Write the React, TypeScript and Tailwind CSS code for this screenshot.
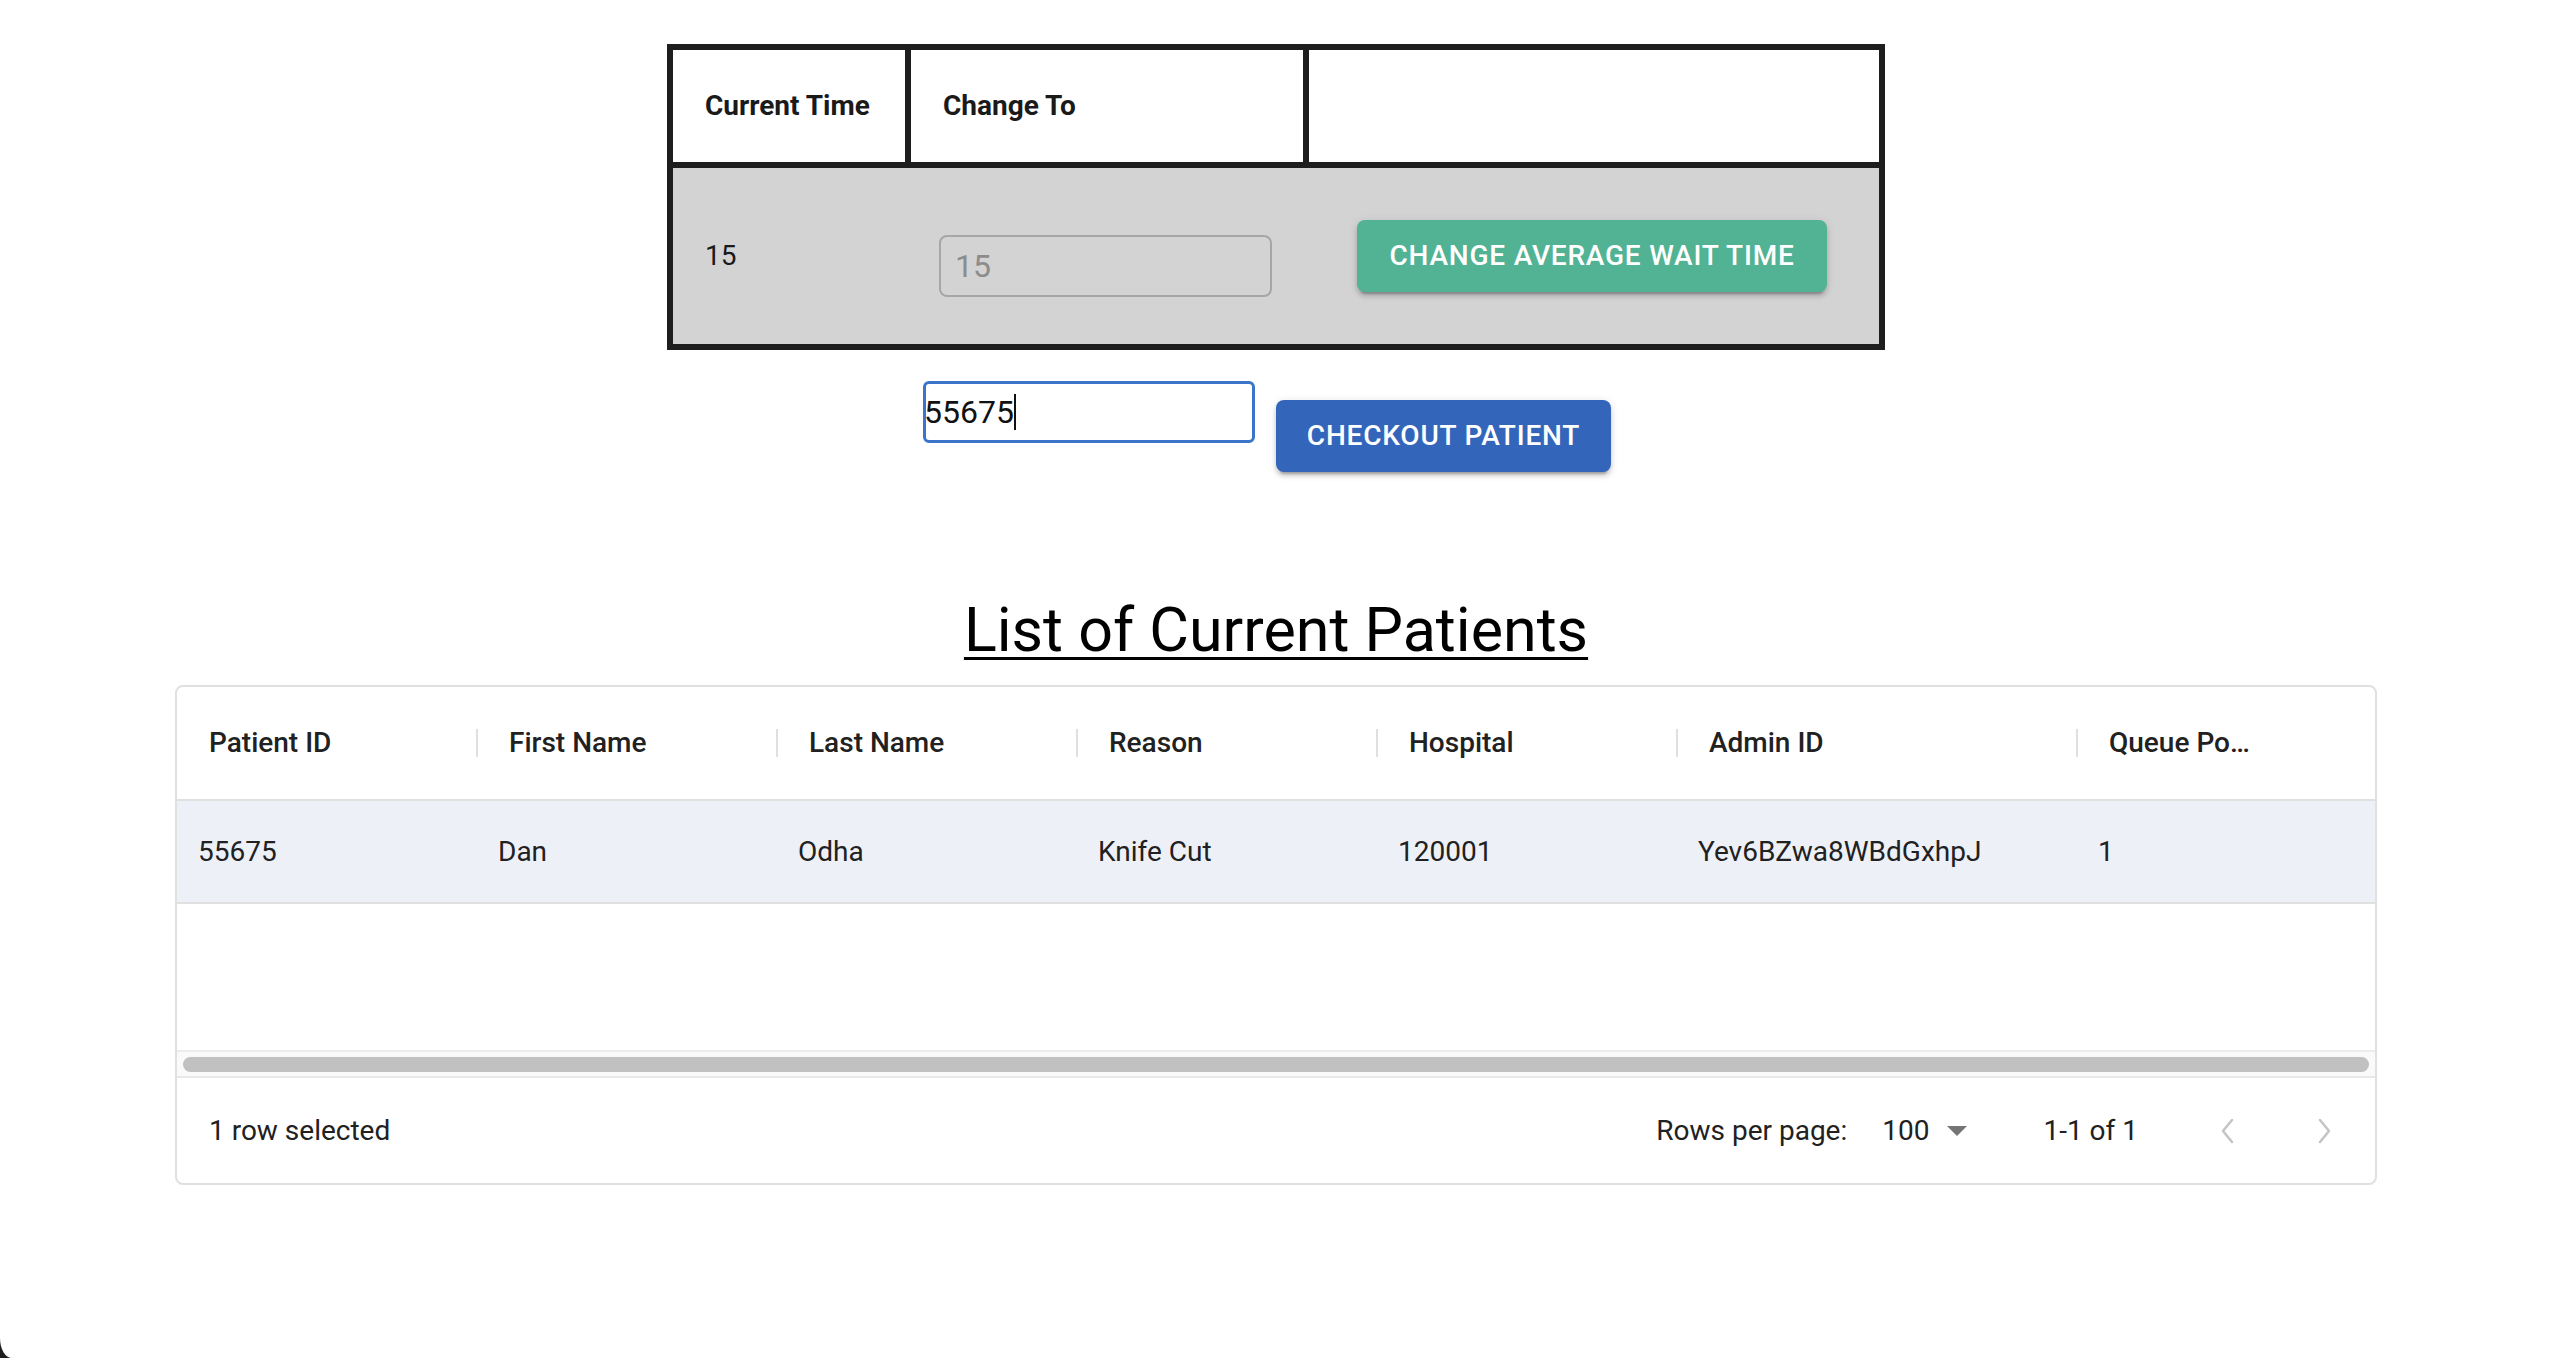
import React from "react";

const cols = [
  { h: "Patient ID", v: "55675", w: "w-[300px]" },
  { h: "First Name", v: "Dan", w: "w-[300px]" },
  { h: "Last Name", v: "Odha", w: "w-[300px]" },
  { h: "Reason", v: "Knife Cut", w: "w-[300px]" },
  { h: "Hospital", v: "120001", w: "w-[300px]" },
  { h: "Admin ID", v: "Yev6BZwa8WBdGxhpJ", w: "w-[400px]" },
  { h: "Queue Position", v: "1", w: "flex-1" },
];

function ChevronL() {
  return (
    <svg width="16" height="28" viewBox="0 0 16 28" fill="none">
      <polyline points="12,3 3,14 12,25" stroke="#c4c4c4" strokeWidth="2.5" strokeLinecap="round" strokeLinejoin="round" />
    </svg>
  );
}
function ChevronR() {
  return (
    <svg width="16" height="28" viewBox="0 0 16 28" fill="none">
      <polyline points="4,3 13,14 4,25" stroke="#c4c4c4" strokeWidth="2.5" strokeLinecap="round" strokeLinejoin="round" />
    </svg>
  );
}

export default function App() {
  return (
    <div className="relative w-full h-[1358px] overflow-hidden bg-white font-[family-name:Roboto,sans-serif] text-[#212121]">
      {/* Top wait-time table */}
      <div className="mx-auto mt-[44px] w-[1218px] border-[6px] border-[#1e1e1e]">
        <div className="flex h-[118px] border-b-[6px] border-[#1e1e1e]">
          <div className="w-[238px] flex items-center pl-[32px] border-r-[6px] border-[#1e1e1e] text-[28px] font-bold text-[#1a1a1a]">
            Current Time
          </div>
          <div className="w-[398px] flex items-center pl-[32px] border-r-[6px] border-[#1e1e1e] text-[28px] font-bold text-[#1a1a1a]">
            Change To
          </div>
          <div className="flex-1" />
        </div>
        <div className="flex items-center h-[176px] bg-[#d3d3d3] pl-[32px]">
          <div className="w-[234px] text-[28px] text-[#1a1a1a]">15</div>
          <div className="w-[333px] h-[62px] mt-[20px] border-2 border-[#a6a6a6] rounded-[8px] flex items-center pl-[14px] text-[32px] text-[#8c8c8c]">
            15
          </div>
          <button className="ml-[85px] w-[470px] h-[72px] rounded-[8px] bg-[#52b394] text-white text-[28px] font-medium tracking-[0.8px] uppercase shadow-[0_6px_2px_-4px_rgba(0,0,0,0.2),0_4px_4px_0_rgba(0,0,0,0.14),0_2px_10px_0_rgba(0,0,0,0.12)]">
            Change Average Wait Time
          </button>
        </div>
      </div>

      {/* Checkout row */}
      <div className="flex justify-center items-start mt-[31px]">
        <div className="w-[332px] h-[62px] border-[3px] border-[#3b74c8] rounded-[6px] flex items-center text-[32px] text-[#111]">
          <span className="-ml-[2px]">55675</span>
          <span className="inline-block w-[2px] h-[36px] bg-[#111]" />
        </div>
        <button className="ml-[21px] mr-[18px] mt-[19px] w-[335px] h-[72px] rounded-[8px] bg-[#3366bb] text-white text-[28px] font-medium tracking-[0.8px] uppercase shadow-[0_6px_2px_-4px_rgba(0,0,0,0.2),0_4px_4px_0_rgba(0,0,0,0.14),0_2px_10px_0_rgba(0,0,0,0.12)]">
          Checkout Patient
        </button>
      </div>

      {/* Title */}
      <div className="mt-[122px] h-[72px] leading-[72px] text-center text-[61px] text-black underline decoration-[3px] underline-offset-[6px]">
        List of Current Patients
      </div>

      {/* Data grid */}
      <div className="mx-auto mt-[19px] w-[2202px] border-2 border-[#e0e0e0] rounded-[8px] overflow-hidden">
        <div className="flex h-[114px] border-b-2 border-[#e0e0e0]">
          {cols.map((c, i) => (
            <div key={c.h} className={`${c.w} relative flex items-center pl-[32px] text-[28px] font-medium text-[#212121]`}>
              {i > 0 && <div className="absolute left-[-1px] top-1/2 -translate-y-1/2 w-[2px] h-[28px] bg-[#e0e0e0]" />}
              {i === cols.length - 1 ? (
                <div className="w-[146px] truncate">{c.h}</div>
              ) : (
                <div>{c.h}</div>
              )}
            </div>
          ))}
        </div>
        <div className="flex h-[103px] bg-[#eef0f8] border-b-2 border-[#e0e0e0]">
          {cols.map((c) => (
            <div key={c.h} className={`${c.w} flex items-center pl-[21px] text-[28px] text-[#212121]`}>
              {c.v}
            </div>
          ))}
        </div>
        <div className="h-[146px]" />
        <div className="h-[26px] bg-[#fafafa] border-t-2 border-[#ececec] flex items-center px-[6px]">
          <div className="w-full h-[15px] rounded-full bg-[#c1c1c1]" />
        </div>
        <div className="h-[107px] border-t-2 border-[#e8e8e8] flex items-center text-[28px] text-[#212121]">
          <div className="pl-[32px]">1 row selected</div>
          <div className="ml-auto flex items-center pr-[43px]">
            <span>Rows per page:</span>
            <span className="ml-[35px]">100</span>
            <svg className="ml-[17px]" width="22" height="12" viewBox="0 0 22 12">
              <path d="M1 1 L11 11 L21 1 Z" fill="#757575" />
            </svg>
            <span className="ml-[75px]">1-1 of 1</span>
            <span className="ml-[82px] flex items-center">
              <ChevronL />
            </span>
            <span className="ml-[80px] flex items-center">
              <ChevronR />
            </span>
          </div>
        </div>
      </div>

      {/* window corner */}
      <div className="absolute left-0 bottom-0 w-[12px] h-[20px] bg-[#1e1e1e]">
        <div className="w-full h-full bg-white rounded-bl-[12px_20px]" />
      </div>
    </div>
  );
}
